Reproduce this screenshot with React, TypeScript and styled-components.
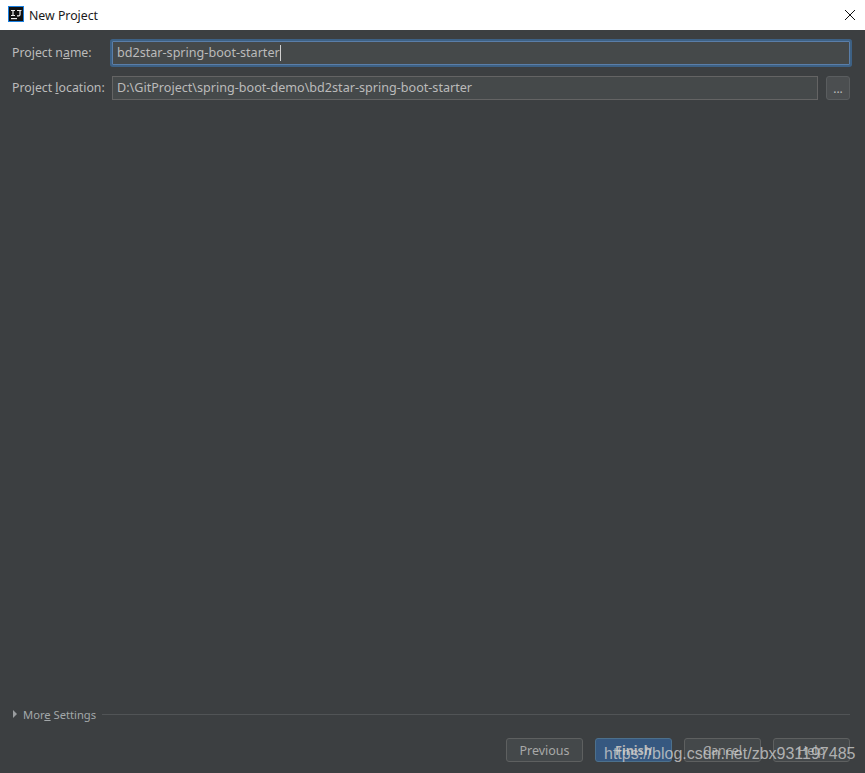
import { createGlobalStyle } from "styled-components";
import styled from "styled-components";

const GlobalStyle = createGlobalStyle`
    html, body {
        margin: 0;
        padding: 0;
        height: 100%;
        background: #3c3f41;
    }
    #root {
        height: 100%;
    }
`;

const Dialog = styled.div`
    position: relative;
    width: 865px;
    height: 773px;
    display: flex;
    flex-direction: column;
    overflow: hidden;
    background: #3c3f41;
    font-family: "Noto Sans", "Liberation Sans", sans-serif;
    font-size: 12.5px;
    color: #bbbbbb;
`;

const TitleBar = styled.header`
    height: 30px;
    flex: none;
    display: flex;
    align-items: center;
    padding: 0 8px;
    background: #ffffff;
    color: #1a1a1a;
    font-size: 12.3px;
`;

const LogoWrap = styled.div`
    display: flex;
    margin-bottom: 2px;
`;

const TitleText = styled.span`
    margin-left: 5px;
    flex: 1;
`;

const CloseButton = styled.div`
    width: 12px;
    height: 12px;
    margin-right: 1px;
    display: flex;
`;

const Form = styled.div`
    flex: 1;
    display: flex;
    flex-direction: column;
    gap: 11px;
    padding: 11px 15px 0 12px;
`;

const Row = styled.div`
    height: 24px;
    display: flex;
    align-items: center;
    gap: 8px;
`;

const Label = styled.label`
    width: 92px;
    flex: none;
    white-space: nowrap;
    font-size: 12.3px;
    padding-bottom: 1px;
`;

const Field = styled.div<{ $focused?: boolean }>`
    flex: 1;
    height: 24px;
    box-sizing: border-box;
    display: flex;
    align-items: center;
    padding: 0 4px 1px;
    background: #45494a;
    border: 1px solid #646464;
    color: #bbbbbb;
    font-size: 12.6px;
    white-space: nowrap;
    ${(props) =>
        props.$focused &&
        `
        border-color: #5a7ea8;
        box-shadow: 0 0 0 2px #3d6185;
        border-radius: 1px;
    `}
`;

const Caret = styled.span`
    display: inline-block;
    width: 1px;
    height: 16px;
    background: #d0d0d0;
`;

const BrowseButton = styled.div`
    width: 24px;
    height: 24px;
    box-sizing: border-box;
    flex: none;
    display: flex;
    align-items: center;
    justify-content: center;
    padding-top: 2px;
    background: #4b4e50;
    border: 1px solid #5a5d5f;
    border-radius: 3px;
    font-size: 12px;
    line-height: 1;
`;

const SettingsRow = styled.div`
    height: 16px;
    flex: none;
    display: flex;
    align-items: center;
    padding: 0 15px 0 13px;
`;

const Arrow = styled.span`
    width: 0;
    height: 0;
    border-top: 4px solid transparent;
    border-bottom: 4px solid transparent;
    border-left: 4px solid #9a9d9f;
`;

const SettingsLabel = styled.span`
    margin-left: 6px;
    color: #a3a8aa;
    font-size: 11.2px;
`;

const Divider = styled.div`
    flex: 1;
    height: 1px;
    margin-left: 6px;
    background: #515456;
`;

const Footer = styled.footer`
    height: 24px;
    flex: none;
    display: flex;
    justify-content: flex-end;
    gap: 12px;
    padding: 16px 15px 11px 0;
`;

const Button = styled.div<{ $primary?: boolean }>`
    width: 77px;
    height: 24px;
    box-sizing: border-box;
    display: flex;
    align-items: center;
    justify-content: center;
    border-radius: 3px;
    border: 1px solid ${(props) => (props.$primary ? "#4c708c" : "#5e6060")};
    background: ${(props) => (props.$primary ? "#365880" : "#44484a")};
    color: ${(props) => (props.$primary ? "#bbbbbb" : "#a8a8a8")};
    font-weight: ${(props) => (props.$primary ? 700 : 400)};
`;

const Watermark = styled.div`
    position: absolute;
    left: 604px;
    top: 744px;
    font-family: "Liberation Sans", Arial, sans-serif;
    font-size: 16px;
    line-height: 20px;
    color: rgba(205, 205, 205, 0.8);
    white-space: nowrap;
`;

const Mnemonic = styled.span`
    text-decoration: underline;
`;

function AppLogo() {
    return (
        <svg width="16" height="16" viewBox="0 0 16 16">
            <rect x="0.5" y="0.5" width="15" height="15" fill="#111111" stroke="#1a7fe0" />
            <rect x="3" y="12" width="6" height="1.2" fill="#eeeeee" />
            <path d="M3 4.5h4M5 4.5v5M3 9.5h4M9 4.5h4.5M12 4.5v4q0 1.3-1.3 1.3h-1.7" fill="none" stroke="#eeeeee" strokeWidth="1.2" />
        </svg>
    );
}

function CloseIcon() {
    return (
        <svg width="12" height="12" viewBox="0 0 12 12">
            <path d="M1 1l10 10M11 1L1 11" stroke="#111111" strokeWidth="1" fill="none" />
        </svg>
    );
}

function App() {
    return (
        <>
            <GlobalStyle />
            <Dialog>
                <TitleBar>
                    <LogoWrap>
                        <AppLogo />
                    </LogoWrap>
                    <TitleText>New Project</TitleText>
                    <CloseButton>
                        <CloseIcon />
                    </CloseButton>
                </TitleBar>
                <Form>
                    <Row>
                        <Label>
                            Project n<Mnemonic>a</Mnemonic>me:
                        </Label>
                        <Field $focused>
                            bd2star-spring-boot-starter
                            <Caret />
                        </Field>
                    </Row>
                    <Row>
                        <Label>
                            Project <Mnemonic>l</Mnemonic>ocation:
                        </Label>
                        <Field>D:\GitProject\spring-boot-demo\bd2star-spring-boot-starter</Field>
                        <BrowseButton>...</BrowseButton>
                    </Row>
                </Form>
                <SettingsRow>
                    <Arrow />
                    <SettingsLabel>
                        Mor<Mnemonic>e</Mnemonic> Settings
                    </SettingsLabel>
                    <Divider />
                </SettingsRow>
                <Footer>
                    <Button>Previous</Button>
                    <Button $primary>Finish</Button>
                    <Button>Cancel</Button>
                    <Button>Help</Button>
                </Footer>
                <Watermark>https://blog.csdn.net/zbx931197485</Watermark>
            </Dialog>
        </>
    );
}

export default App;
